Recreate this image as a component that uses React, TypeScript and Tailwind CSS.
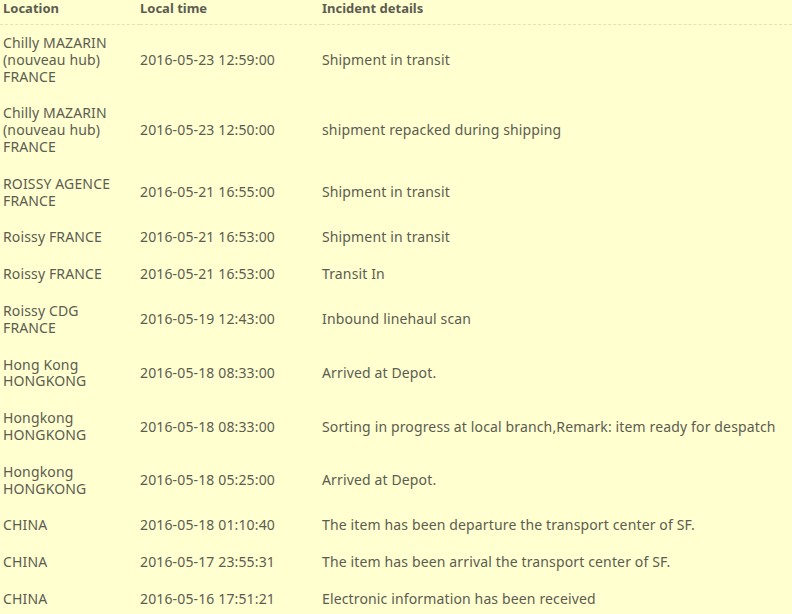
import React from "react";

const rows: [string[], string, string][] = [
  [["Chilly MAZARIN", "(nouveau hub)", "FRANCE"], "2016-05-23 12:59:00", "Shipment in transit"],
  [["Chilly MAZARIN", "(nouveau hub)", "FRANCE"], "2016-05-23 12:50:00", "shipment repacked during shipping"],
  [["ROISSY AGENCE", "FRANCE"], "2016-05-21 16:55:00", "Shipment in transit"],
  [["Roissy FRANCE"], "2016-05-21 16:53:00", "Shipment in transit"],
  [["Roissy FRANCE"], "2016-05-21 16:53:00", "Transit In"],
  [["Roissy CDG", "FRANCE"], "2016-05-19 12:43:00", "Inbound linehaul scan"],
  [["Hong Kong", "HONGKONG"], "2016-05-18 08:33:00", "Arrived at Depot."],
  [["Hongkong", "HONGKONG"], "2016-05-18 08:33:00", "Sorting in progress at local branch,Remark: item ready for despatch"],
  [["Hongkong", "HONGKONG"], "2016-05-18 05:25:00", "Arrived at Depot."],
  [["CHINA"], "2016-05-18 01:10:40", "The item has been departure the transport center of SF."],
  [["CHINA"], "2016-05-17 23:55:31", "The item has been arrival the transport center of SF."],
  [["CHINA"], "2016-05-16 17:51:21", "Electronic information has been received"],
];

export default function App() {
  return (
    <div
      className="w-[792px] h-[614px] overflow-hidden bg-[#ffffd0] text-[#5c5c50]"
      style={{ fontFamily: '"Noto Sans", "Open Sans", sans-serif' }}
    >
      <table className="w-full border-collapse text-[14px] leading-[16.8px] tracking-[0.14px]">
        <colgroup>
          <col className="w-[140px]" />
          <col className="w-[182px]" />
          <col />
        </colgroup>
        <thead>
          <tr className="border-b border-dashed border-[#e2e2b8]">
            <th className="text-left font-bold text-[13px] leading-[17px] tracking-normal pl-[3px] pt-0 pb-[7px]">Location</th>
            <th className="text-left font-bold text-[13px] leading-[17px] tracking-normal pt-0 pb-[7px]">Local time</th>
            <th className="text-left font-bold text-[13px] leading-[17px] tracking-normal pt-0 pb-[7px]">Incident details</th>
          </tr>
        </thead>
        <tbody>
          {rows.map(([loc, time, detail], i) => (
            <tr key={i}>
              <td className="pl-[3px] py-[10px] align-middle">
                {loc.map((l, j) => (
                  <div key={j}>{l}</div>
                ))}
              </td>
              <td className="py-[10px] align-middle whitespace-nowrap">{time}</td>
              <td className="py-[10px] align-middle whitespace-nowrap">{detail}</td>
            </tr>
          ))}
        </tbody>
      </table>
    </div>
  );
}
